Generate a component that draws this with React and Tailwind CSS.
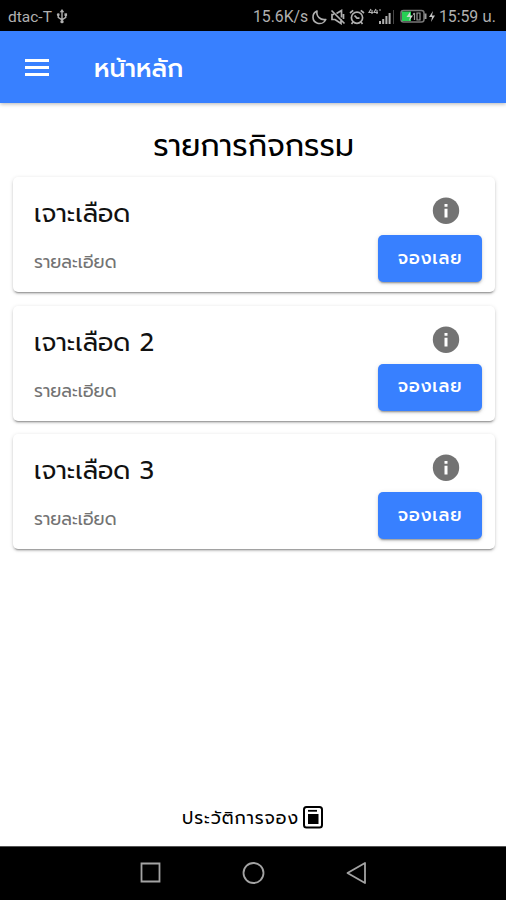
const activities = [
  { id: 1, title: "เจาะเลือด", detail: "รายละเอียด" },
  { id: 2, title: "เจาะเลือด 2", detail: "รายละเอียด" },
  { id: 3, title: "เจาะเลือด 3", detail: "รายละเอียด" }
];

function StatusBar() {
  return (
    <div className="h-[31px] shrink-0 bg-black text-[#b0b0b0] font-[Roboto,'Noto_Sans_Thai',sans-serif] text-[16px] leading-[20px] flex items-center justify-between pl-2 pr-[10px] pt-[3px]">
      <div className="flex items-center gap-1 whitespace-nowrap">
        <span className="text-[15.5px]">dtac-T</span>
        <svg className="w-[12px] h-[15px] mb-[1px]" viewBox="0 0 12 16" fill="none" stroke="currentColor" strokeWidth="1.5">
          <path d="M6 2v11M2 6v3l4 2.5M10 6v3l-4 2.5" />
          <path d="M6 0 8.5 3.5h-5z" fill="currentColor" stroke="none" />
          <circle cx="6" cy="13.5" r="1.8" fill="currentColor" stroke="none" />
          <circle cx="2" cy="6" r="1.5" fill="currentColor" stroke="none" />
          <path d="M8.6 4.6h2.8v2.8H8.6z" fill="currentColor" stroke="none" />
        </svg>
      </div>
      <div className="flex items-center whitespace-nowrap">
        <span className="w-[55px] mr-[4px] text-[15.8px]">15.6K/s</span>
        <svg className="w-[15px] h-[16px] mr-[3px]" viewBox="0 0 15 16" fill="none" stroke="currentColor" strokeWidth="1.6">
          <path d="M5 2C-.5 4.500-.3 12.500 5.500 14.200c3.600 1 7-.8 8.300-3.700C8.500 11.500 4 7.500 5 2z" strokeLinejoin="round" />
        </svg>
        <svg className="w-[16px] h-[16px] mr-[3px]" viewBox="0 0 16 16" fill="none" stroke="currentColor" strokeWidth="1.7">
          <path d="M1.500 1.500l13 13M4 5.500H2v5h3l6 4V10M6.500 4.500l5-3v7M13.500 5v5" />
        </svg>
        <svg className="w-[16px] h-[16px] mr-[3px]" viewBox="0 0 16 16" fill="none" stroke="currentColor" strokeWidth="1.700">
          <circle cx="8" cy="8.700" r="5.600" />
          <path d="M1 4l3.200-2.700M15 4l-3.200-2.700M5.500 6.500 8 9.200h2.500M4 13l-1.500 2M12 13l1.500 2" />
        </svg>
        <svg className="w-[26px] h-[18px] mr-[6px]" viewBox="0 0 26 18" fill="none" stroke="currentColor">
          <path d="M3 1 1 4.500h4M4 2v4M8 1 6 4.500h4M9 2v4M11 2h2" strokeWidth="1.200" />
          <path d="M12 16v-3M15.200 16v-5M18.400 16V8M21.600 16V5" strokeWidth="2" />
          <path d="M25.500 2v14" strokeWidth="1" opacity=".4" />
        </svg>
        <svg className="w-[36px] h-[15px] mr-[3px] mb-[2px]" viewBox="0 0 36 15">
          <rect x="1" y="1.500" width="23" height="11.500" rx="2.500" fill="none" stroke="#777" strokeWidth="1.500" />
          <rect x="2" y="2.500" width="9" height="9.500" fill="#27cf55" />
          <path d="M10 3 6.500 8H10l-1 4 4-5.500h-3z" fill="#c8dccd" />
          <path d="M14.500 4v7M13 5.500l1.500-1.500M17 4h3v7h-3z" fill="none" stroke="#999" strokeWidth="1.200" />
          <path d="M25.500 4.500v5.500" stroke="#999" strokeWidth="2" />
          <path d="M33 2l-4 6h3l-1 5 4-6.500h-3z" fill="#c4c4c4" />
        </svg>
        <span className="text-[15.8px]">15:59 น.</span>
      </div>
    </div>
  );
}

function Header() {
  return (
    <header className="h-[72px] shrink-0 bg-[#3880ff] text-white flex items-center pl-[25px] shadow-[0_1px_4px_rgba(0,0,0,0.3)]">
      <button className="w-6 pt-[1px] flex flex-col gap-[4px]" aria-label="เมนู">
        <span className="h-[3px] bg-white" />
        <span className="h-[3px] bg-white" />
        <span className="h-[3px] bg-white" />
      </button>
      <h1 className="ml-[45px] pt-[3px] text-[25px] leading-[32px] font-medium whitespace-nowrap">หน้าหลัก</h1>
    </header>
  );
}

function ActivityCard({ title, detail }) {
  return (
    <div className="h-[115.3px] bg-white rounded-[5px] pl-[21px] pr-[13px] flex justify-between shadow-[0_3px_1px_-2px_rgba(0,0,0,0.22),0_2px_2px_0_rgba(0,0,0,0.14),0_1px_4px_0_rgba(0,0,0,0.14)]">
      <div className="pt-[21px] whitespace-nowrap">
        <h3 className="text-[25.2px] leading-[32px] text-[#111]">{title}</h3>
        <p className="mt-[20px] text-[17.5px] leading-[24px] text-[#737373]">{detail}</p>
      </div>
      <div className="w-[104px] pt-[20px] flex flex-col">
        <svg className="w-[28px] h-[28px] ml-[54px]" viewBox="0 0 28 28" aria-label="info">
          <circle cx="14" cy="13.700" r="13.200" fill="#737373" />
          <path d="M12.500 7h3v2.700h-3zM12.500 11.800h3v8.700h-3z" fill="#fff" />
        </svg>
        <button className="mt-[10px] h-[47px] w-[104px] rounded-[5px] bg-[#3880ff] text-white text-[17.5px] font-medium tracking-[0.8px] pb-[1px] whitespace-nowrap shadow-[0_3px_1px_-2px_rgba(0,0,0,0.2),0_2px_2px_0_rgba(0,0,0,0.14),0_1px_5px_0_rgba(0,0,0,0.12)]">
          จองเลย
        </button>
      </div>
    </div>
  );
}

function HistoryLink() {
  return (
    <button className="h-[58px] shrink-0 w-full pl-[182px] flex items-center gap-1 text-black whitespace-nowrap">
      <span className="w-[117px] pt-[2px] text-left text-[17.5px] tracking-[0.9px]">ประวัติการจอง</span>
      <svg className="w-[20px] h-[24px]" viewBox="0 0 20 24">
        <rect x="1" y="2" width="18" height="20.500" rx="2.500" fill="#fff" stroke="#000" strokeWidth="2" />
        <path d="M5 5.800h9" stroke="#000" strokeWidth="1.800" />
        <rect x="5" y="9" width="10.500" height="10" fill="#000" />
      </svg>
    </button>
  );
}

function NavBar() {
  return (
    <div className="h-[54px] shrink-0 bg-black border-t border-[#555] flex items-center pl-[140px] pb-[1px]">
      <svg className="w-[228px] h-[24px]" viewBox="0 0 228 24" fill="none" stroke="#a3a3a3" strokeWidth="1.800">
        <path d="M1.500 2.500h18v18h-18z" />
        <circle cx="113.500" cy="12" r="10" />
        <path d="M225 2v20l-17.500-10z" strokeLinejoin="round" />
      </svg>
    </div>
  );
}

export default function App() {
  return (
    <div className="w-[506px] h-[900px] overflow-hidden bg-white flex flex-col font-['Prompt','Kanit','Noto_Sans_Thai','Noto_Sans',sans-serif]">
      <StatusBar />
      <Header />
      <main className="flex-1 px-[13px] pr-[11px]">
        <h2 className="h-[74px] pt-[23px] pr-[1px] text-center text-[30.2px] leading-[40px] text-black whitespace-nowrap">รายการกิจกรรม</h2>
        <div className="flex flex-col gap-[13.300px]">
          {activities.map((item) => (
            <ActivityCard key={item.id} title={item.title} detail={item.detail} />
          ))}
        </div>
      </main>
      <HistoryLink />
      <NavBar />
    </div>
  );
}
